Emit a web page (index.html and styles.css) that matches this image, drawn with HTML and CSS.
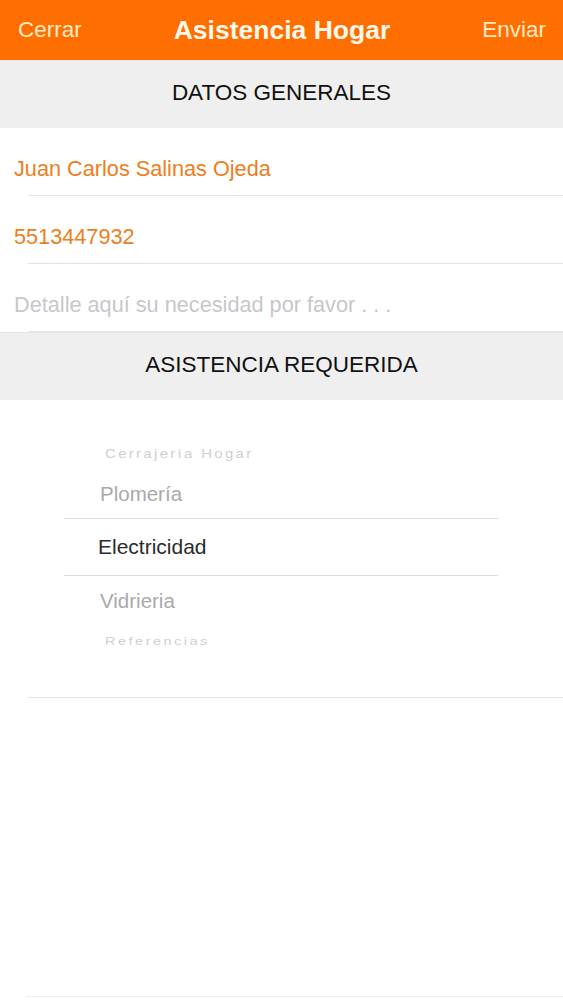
FILE: index.html
```html
<html>
  <head>
    <title>Asistencia Hogar</title>
    <link rel="stylesheet" href="styles.css">
  </head>
  <body>
    <div class="navbar">
      <span class="nav-btn">Cerrar</span>
      <span class="nav-title">Asistencia Hogar</span>
      <span class="nav-btn">Enviar</span>
    </div>

    <div class="section">DATOS GENERALES</div>

    <div class="row filled">Juan Carlos Salinas Ojeda</div>
    <div class="divider"></div>
    <div class="row filled">5513447932</div>
    <div class="divider"></div>
    <div class="row placeholder">Detalle aquí su necesidad por favor . . .</div>
    <div class="divider"></div>

    <div class="section">ASISTENCIA REQUERIDA</div>

    <div class="picker-wrap">
      <div class="picker">
        <div class="opt far">Cerrajería Hogar</div>
        <div class="opt near top">Plomería</div>
        <div class="opt selected">Electricidad</div>
        <div class="opt near bottom">Vidrieria</div>
        <div class="opt far last">Referencias</div>
      </div>
    </div>
    <div class="divider"></div>

    <div class="empty"></div>
    <div class="divider light"></div>
  </body>
</html>
```

FILE: styles.css
```css
body {
  margin: 0;
  font-family: "Liberation Sans", Arial, sans-serif;
  background: #ffffff;
  color: #000000;
}

.navbar {
  height: 60px;
  background: #fe6e00;
  display: flex;
  align-items: center;
  justify-content: space-between;
  padding: 0 17px 0 18px;
}

.nav-btn {
  font-size: 22.5px;
  color: #ffe9c4; /* creamy button text */
}

.nav-title {
  font-size: 26.5px;
  font-weight: bold;
  color: #fff7ea;
}

.section {
  height: 68px;
  background: #efeff0;
  display: flex;
  align-items: center;
  justify-content: center;
  padding-bottom: 4px;
  box-sizing: border-box;
  font-size: 22.5px;
  color: #111111;
  border-top: 1px solid #e6e6e6;
}

.row {
  height: 67px;
  display: flex;
  align-items: center;
  padding: 14px 0 0 14px;
  box-sizing: border-box;
  font-size: 21.7px;
}

.filled {
  color: #ef7d20;
}

.placeholder {
  color: #c7c7cc;
}

.divider {
  height: 1px;
  margin-left: 28px;
  background: #e3e3e6;
}

.divider.light {
  margin-left: 26px;
  background: #ececec;
}

.picker-wrap {
  height: 297px;
  padding-top: 40px;
  box-sizing: border-box;
}

.picker {
  margin-left: 64px;
  width: 434px;
}

.opt {
  display: flex;
  align-items: center;
  padding-left: 36px;
  box-sizing: border-box;
}

.far {
  height: 26px;
  padding-left: 41px;
  font-size: 15px;
  letter-spacing: 2.3px;
  color: #cfcfd2;
  transform: scaleY(0.8);
}

.far.last {
  height: 30px;
  font-size: 14.5px;
  letter-spacing: 2.5px;
}

.near {
  font-size: 20.5px;
  color: #a9a9ad;
}

.near.top {
  height: 52px;
  padding-top: 4px;
}

.near.bottom {
  height: 50px;
}

.selected {
  height: 58px;
  padding-left: 34px;
  font-size: 21px;
  color: #2b2b2b;
  border-top: 1px solid #dcdcdf;
  border-bottom: 1px solid #dcdcdf;
}

.empty {
  height: 298px;
}
```
